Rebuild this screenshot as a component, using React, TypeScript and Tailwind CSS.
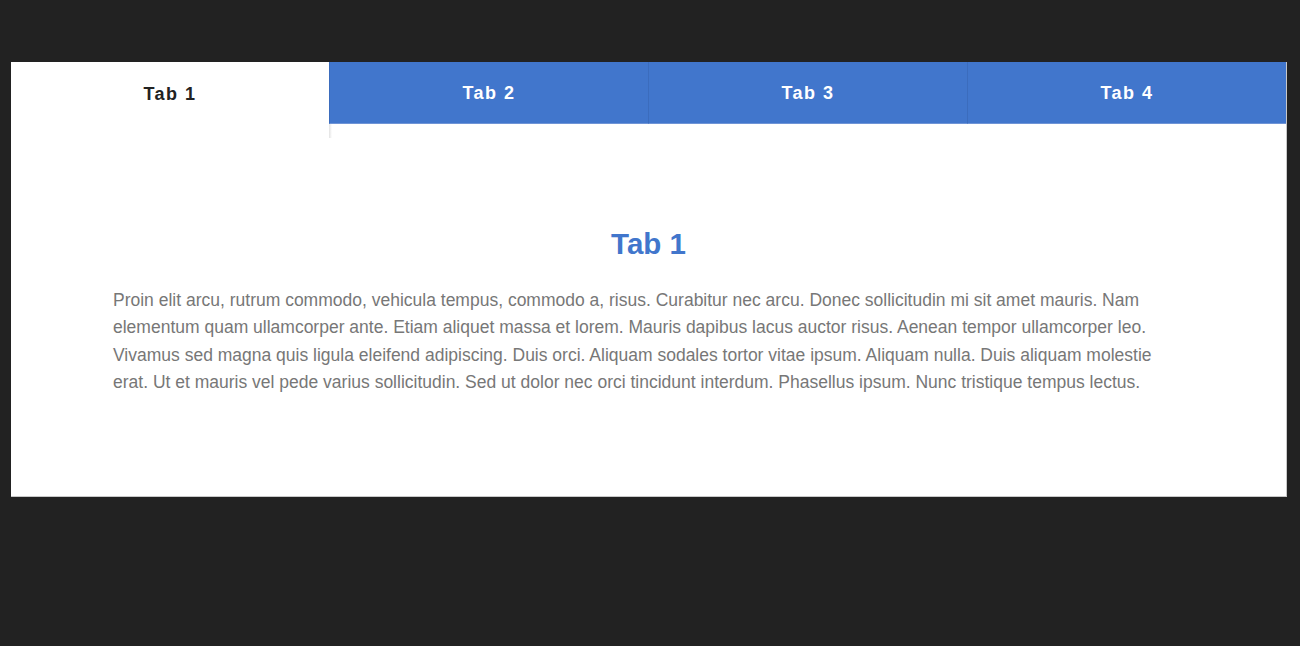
const tabs = ["Tab 1", "Tab 2", "Tab 3", "Tab 4"];

const text =
  "Proin elit arcu, rutrum commodo, vehicula tempus, commodo a, risus. Curabitur nec arcu. Donec sollicitudin mi sit amet mauris. Nam elementum quam ullamcorper ante. Etiam aliquet massa et lorem. Mauris dapibus lacus auctor risus. Aenean tempor ullamcorper leo. Vivamus sed magna quis ligula eleifend adipiscing. Duis orci. Aliquam sodales tortor vitae ipsum. Aliquam nulla. Duis aliquam molestie erat. Ut et mauris vel pede varius sollicitudin. Sed ut dolor nec orci tincidunt interdum. Phasellus ipsum. Nunc tristique tempus lectus.";

export default function App() {
  const active = 0;

  return (
    <div
      className="min-h-[646px] bg-[#222222] pt-[62px]"
      style={{ fontFamily: '"Liberation Sans", Arial, sans-serif' }}
    >
      <div className="ml-[11px] w-[1276px] h-[435px] bg-white border-r border-b border-[#c8c8c8]">
        {/* tabs */}
        <div className="flex h-[62px]">
          {tabs.map((t, i) => (
            <div
              key={t}
              className={
                i === active
                  ? "relative flex-1 flex items-center justify-center pt-[2px] bg-white text-[#222] text-[18px] font-bold tracking-[1.5px]"
                  : "flex-1 flex items-center justify-center pt-[2px] bg-[#4176cc] text-white text-[18px] font-bold tracking-[1.5px] border-l border-[#3b6cbd] first:border-l-0 border-b border-b-[#6f94d6]"
              }
            >
              {t}
              {i === active && (
                <span className="absolute right-[-3px] top-[62px] h-[14px] w-[3px] bg-gradient-to-r from-[#e2e2e2] to-white" />
              )}
            </div>
          ))}
        </div>

        {/* panel */}
        <div className="px-[102px] pt-[101px]">
          <h2 className="text-center text-[29.5px] leading-[38px] font-bold text-[#4176cc]">
            Tab 1
          </h2>
          <p className="mt-[24px] w-[1060px] text-[17.5px] leading-[27.4px] text-[#777777]">
            {text}
          </p>
        </div>
      </div>
    </div>
  );
}
